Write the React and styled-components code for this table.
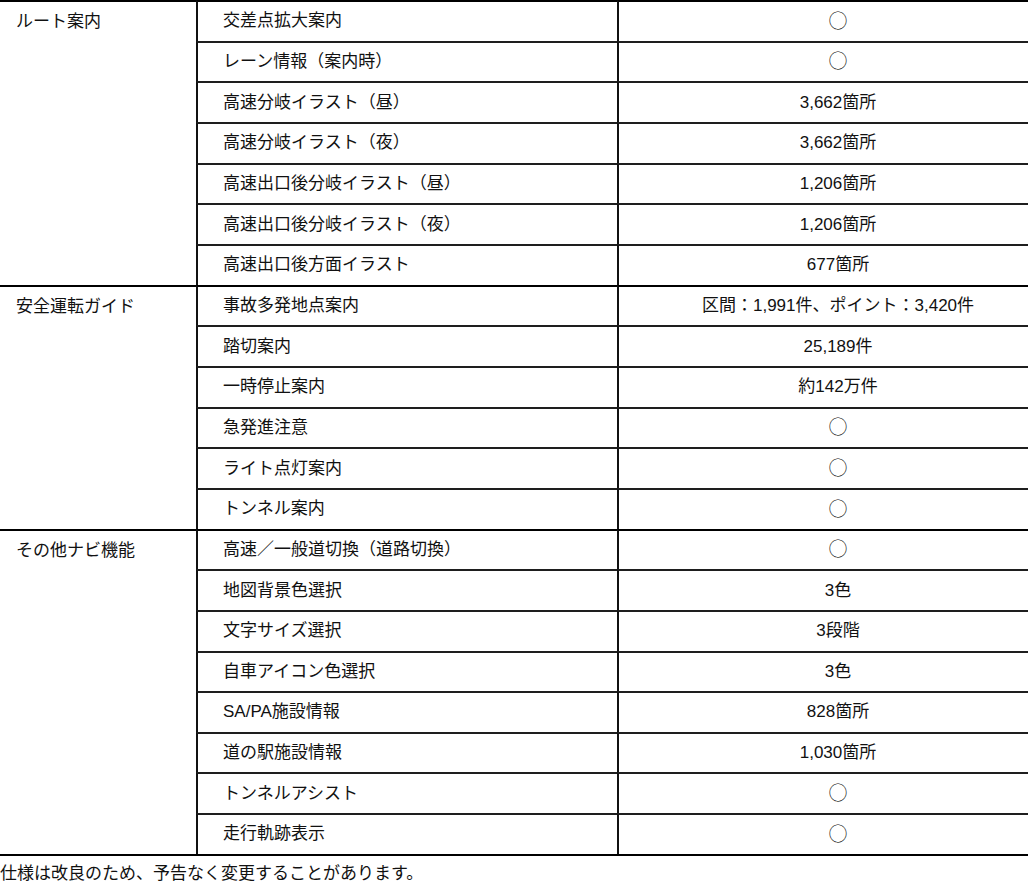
import styled, { createGlobalStyle } from "styled-components";

const GlobalStyle = createGlobalStyle`
  body {
    margin: 0;
    background: #fff;
    color: #111;
    font-family: "Liberation Sans", "Noto Sans CJK JP", sans-serif;
  }
`;

const sections = [
  {
    name: "ルート案内",
    rows: [
      ["交差点拡大案内", null],
      ["レーン情報（案内時）", null],
      ["高速分岐イラスト（昼）", "3,662箇所"],
      ["高速分岐イラスト（夜）", "3,662箇所"],
      ["高速出口後分岐イラスト（昼）", "1,206箇所"],
      ["高速出口後分岐イラスト（夜）", "1,206箇所"],
      ["高速出口後方面イラスト", "677箇所"],
    ],
  },
  {
    name: "安全運転ガイド",
    rows: [
      ["事故多発地点案内", "区間：1,991件、ポイント：3,420件"],
      ["踏切案内", "25,189件"],
      ["一時停止案内", "約142万件"],
      ["急発進注意", null],
      ["ライト点灯案内", null],
      ["トンネル案内", null],
    ],
  },
  {
    name: "その他ナビ機能",
    rows: [
      ["高速／一般道切換（道路切換）", null],
      ["地図背景色選択", "3色"],
      ["文字サイズ選択", "3段階"],
      ["自車アイコン色選択", "3色"],
      ["SA/PA施設情報", "828箇所"],
      ["道の駅施設情報", "1,030箇所"],
      ["トンネルアシスト", null],
      ["走行軌跡表示", null],
    ],
  },
];

const App = () => (
  <Page>
    <GlobalStyle />
    <SpecTable>
      <colgroup>
        <col style={{ width: 196 }} />
        <col style={{ width: 421 }} />
        <col />
      </colgroup>
      <tbody>
        {sections.map((section) =>
          section.rows.map(([feature, value], i) => (
            <Row key={section.name + feature}>
              {i === 0 && (
                <GroupCell rowSpan={section.rows.length}>{section.name}</GroupCell>
              )}
              <FeatureCell $first={i === 0}>{feature}</FeatureCell>
              <ValueCell $first={i === 0}>
                {value ?? <Mark>○</Mark>}
              </ValueCell>
            </Row>
          ))
        )}
      </tbody>
    </SpecTable>
    <Note>仕様は改良のため、予告なく変更することがあります。</Note>
  </Page>
);

const Page = styled.div`
  width: 1028px;
  overflow: hidden;
`;

const SpecTable = styled.table`
  width: 100%;
  table-layout: fixed;
  border-collapse: separate;
  border-spacing: 0;
  border-bottom: 2px solid #000;
  font-size: 17px;
  line-height: 24px;
`;

const Row = styled.tr`
  height: 40.67px;
`;

const Cell = styled.td`
  border-top: 2px solid ${(p) => (p.$first ? "#000" : "#1e1e1e")};
  padding: 0;
  vertical-align: middle;
  white-space: nowrap;
`;

const GroupCell = styled(Cell)`
  border-top-color: #000;
  vertical-align: top;
  padding: 8px 0 0 16px;
`;

const FeatureCell = styled(Cell)`
  border-left: 2px solid #111;
  padding-left: 25px;
`;

const ValueCell = styled(Cell)`
  border-left: 2px solid #111;
  padding-left: 29px;
  text-align: center;
`;

const Mark = styled.span`
  font-family: "Noto Sans CJK JP", sans-serif;
  font-size: 19px;
  font-weight: 300;
`;

const Note = styled.p`
  margin: 6px 0 0 0;
  font-size: 17px;
  line-height: 24px;
`;

export default App;
